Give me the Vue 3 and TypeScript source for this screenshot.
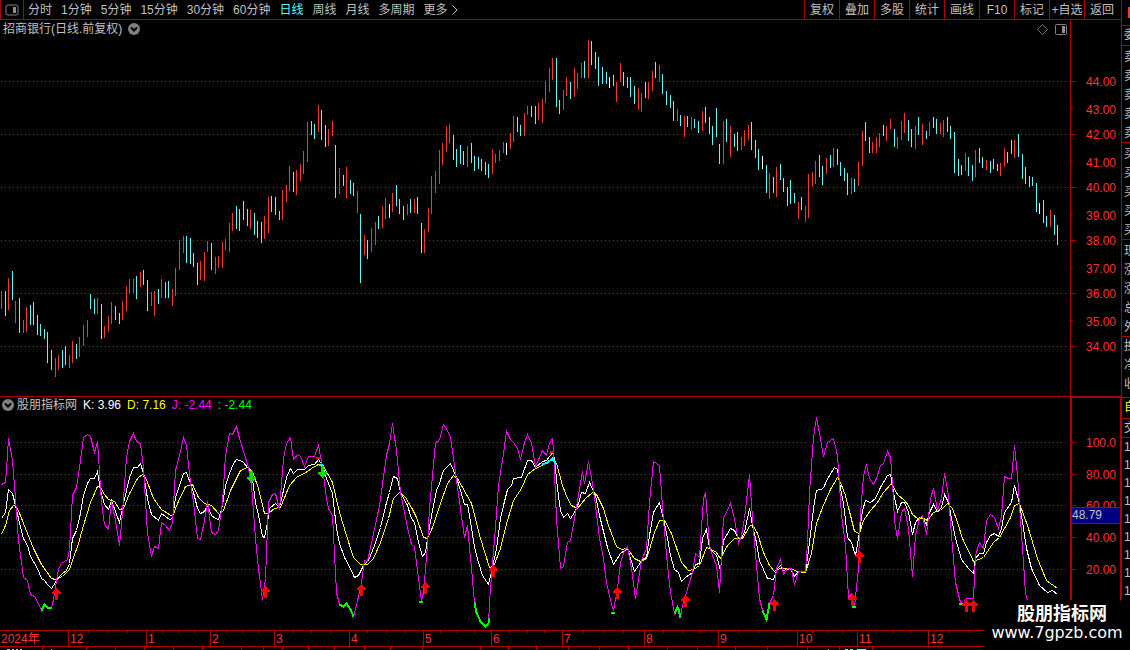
<script setup lang="ts">
import { ref } from 'vue'

interface Candle {
  x: number
  top: number
  height: number
  tone: string
}

const periods = ['分时', '1分钟', '5分钟', '15分钟', '30分钟', '60分钟', '日线', '周线', '月线', '多周期', '更多']
const activePeriod = ref('日线')
const tools = ['复权', '叠加', '多股', '统计', '画线', 'F10', '标记', '+自选', '返回']

const quoteGroups = [
  { id: 'flag', rows: [''] },
  { id: 'ratio', rows: ['委'] },
  { id: 'asks', rows: ['卖', '卖', '卖', '卖', '卖'] },
  { id: 'bids', rows: ['买', '买', '买', '买', '买'] },
  { id: 'stats', rows: ['现', '涨', '涨', '总', '外'] },
  { id: 'extra', rows: ['换', '净', '收'] },
  { id: 'own', rows: ['自'] },
  { id: 'trade', rows: ['交'] },
  { id: 'ticks', rows: ['1', '1', '1', '1', '1', '1', '1', '1', '1'] },
]

// Each entry: x, high, low, tone (r = up, c = down, w = flat)
const candleData = `1 291 309 r;5 291 316 c;8 278 310 r;12 271 300 c;15 301 323 r;19 298 333 c;23 320 333 r;26 307 332 r;30 305 325 c;33 302 325 c;37 315 335 c;40 324 336 c;44 329 339 c;47 332 363 c;51 350 370 c;55 358 377 r;58 355 370 r;62 350 368 c;65 346 365 c;69 355 368 r;72 341 363 r;76 344 359 c;79 337 357 r;83 325 346 r;87 320 337 r;90 294 309 c;94 299 314 c;97 298 314 r;101 304 339 c;104 326 338 r;108 316 332 r;111 302 324 r;115 306 320 c;119 313 324 c;122 301 320 r;126 286 311 r;129 279 294 r;133 279 293 r;136 276 299 c;140 272 287 r;143 270 285 c;147 280 311 c;151 292 306 r;154 291 316 r;158 289 304 c;161 279 298 r;165 282 298 c;168 281 298 c;172 289 306 r;175 268 296 r;179 240 270 r;183 236 253 r;186 236 263 c;190 238 264 c;193 253 267 c;197 263 285 c;200 261 280 r;204 252 281 r;207 241 252 r;211 243 270 c;215 257 274 r;218 256 268 r;222 242 268 r;225 239 250 r;229 223 252 r;232 213 231 r;236 206 229 c;239 209 231 c;243 201 220 c;247 209 226 c;250 210 229 r;254 213 235 c;257 221 238 c;261 222 243 c;264 216 239 r;268 197 233 r;271 196 212 c;275 197 215 c;279 211 220 c;282 190 220 r;286 185 202 r;289 166 191 r;293 172 192 c;296 170 195 r;300 164 181 r;303 151 174 r;307 122 162 r;311 121 135 c;314 124 139 c;318 105 132 r;321 110 140 c;325 125 147 c;328 129 146 r;332 121 136 r;335 145 198 c;339 168 194 r;343 175 186 c;346 167 198 r;350 180 194 c;353 183 196 c;357 191 213 r;360 214 283 c;364 235 255 r;367 240 259 c;371 228 252 r;375 222 245 r;378 216 229 c;382 206 228 r;385 198 219 r;389 204 218 w;392 193 212 r;396 185 206 c;399 199 214 c;403 206 220 c;407 204 215 r;410 199 213 c;414 199 213 r;417 197 214 c;421 223 253 c;424 229 253 r;428 208 232 r;431 176 214 r;435 171 193 r;439 150 184 r;442 143 165 r;446 126 152 r;449 124 143 r;453 135 160 c;456 149 167 c;460 145 164 c;463 151 165 c;467 146 167 r;471 143 163 c;474 156 171 c;478 157 169 c;481 159 171 c;485 162 175 c;488 164 178 c;492 149 174 r;495 154 163 r;499 150 161 r;503 142 153 r;506 143 155 w;510 133 149 r;513 116 142 r;517 117 132 c;520 125 136 c;524 113 136 r;527 106 115 r;531 106 117 c;535 106 124 c;538 103 120 r;542 99 123 r;545 81 103 r;549 68 92 r;552 58 80 r;556 58 107 c;559 100 114 c;563 90 110 r;566 77 96 r;570 82 99 c;574 68 97 r;577 73 89 r;581 63 78 r;584 61 78 c;588 40 78 r;591 41 65 c;595 52 69 c;598 57 86 c;602 67 84 c;606 72 84 c;609 77 88 w;613 75 86 c;616 82 102 r;620 63 82 r;623 72 86 c;627 77 88 c;630 77 97 c;634 86 104 c;638 88 110 r;641 93 112 r;645 82 98 c;648 82 99 r;652 71 91 r;655 62 78 c;659 65 82 r;662 74 94 c;666 91 105 c;670 95 108 c;673 101 121 c;677 109 121 r;680 115 126 c;684 116 137 r;687 116 127 c;691 117 130 r;694 119 128 c;698 121 133 c;702 111 131 r;705 107 123 c;709 117 134 c;712 126 145 c;716 108 137 c;719 144 164 c;723 121 164 r;726 119 142 c;730 126 157 r;734 134 147 c;737 132 151 c;741 137 150 r;744 130 146 r;748 125 140 r;751 122 150 c;755 140 158 c;758 149 170 c;762 156 169 w;766 165 193 c;769 173 199 r;773 177 193 c;776 167 197 r;780 164 180 c;783 178 192 c;787 187 206 c;790 180 204 c;794 193 203 c;798 202 219 r;801 197 210 c;805 206 222 r;808 174 218 r;812 172 187 r;815 161 184 r;819 155 177 c;822 166 185 c;826 158 174 r;830 155 168 c;833 148 167 r;837 149 165 c;840 162 176 c;844 168 181 c;847 173 195 c;851 178 194 r;854 179 192 c;858 162 186 r;862 131 166 r;865 122 141 c;869 137 153 c;872 142 153 r;876 137 153 r;879 133 147 r;883 125 136 c;886 126 141 r;890 119 129 r;894 129 147 c;897 137 149 r;901 121 140 r;904 113 133 r;908 120 141 c;911 129 147 c;915 126 149 r;918 117 135 c;922 124 145 r;926 131 139 c;929 122 136 r;933 117 128 c;936 119 134 c;940 123 134 r;943 120 137 r;947 117 132 c;950 126 139 c;954 132 173 c;958 159 176 c;961 165 175 c;965 153 171 r;968 157 176 c;972 165 181 c;975 150 177 r;979 148 163 c;982 157 168 c;986 160 170 r;990 161 173 c;993 159 169 c;997 164 171 c;1000 163 176 r;1004 148 167 r;1007 152 163 c;1011 140 154 c;1014 140 158 r;1018 134 157 c;1022 154 179 c;1025 167 184 c;1029 176 187 c;1032 177 186 c;1036 183 212 c;1039 203 214 w;1043 200 223 c;1046 216 227 c;1050 210 227 r;1054 215 235 c;1057 225 245 c`

const candles: Candle[] = candleData.split(';').map((entry) => {
  const [x, high, low, tone] = entry.split(' ')
  return { x: Number(x), top: Number(high), height: Number(low) - Number(high), tone }
})

const lineK = '1,518 5,512 8,489 12,493 15,505 20,527 23,538 27,545 30,556 37,568 41,578 44,580 47,584 51,588 55,582 58,577 62,573 66,570 69,563 72,538 76,530 80,513 83,495 87,483 90,478 94,478 97,471 100,490 104,504 108,509 111,500 115,511 119,522 123,503 129,477 133,467 137,467 140,463 143,473 147,498 151,514 158,520 161,513 165,516 169,519 172,518 175,497 179,485 183,473 186,472 190,483 193,492 197,508 200,513 204,511 207,505 211,515 215,518 218,519 222,505 225,485 229,473 233,463 236,459 242,461 248,468 252,478 255,502 258,515 262,536 264,537 267,522 269,508 275,503 279,507 283,490 286,477 290,468 293,473 297,469 304,469 308,465 314,464 318,459 322,465 326,478 332,493 336,528 339,543 344,557 349,566 354,577 358,575 363,565 368,560 374,545 380,527 386,502 389,492 393,476 397,478 400,492 407,505 411,518 414,522 418,542 422,556 425,552 428,532 432,510 436,490 439,483 443,470 450,463 453,470 456,477 460,490 464,504 467,504 471,527 474,547 478,562 482,575 488,584 491,572 496,548 500,518 503,505 507,489 511,485 513,478 521,477 527,460 531,460 535,467 542,461 546,460 552,452 554,458 557,488 560,510 563,517 567,513 570,518 574,512 578,503 581,492 585,493 589,482 595,495 599,515 607,547 613,564 620,553 627,548 634,571 642,559 646,557 649,535 653,512 659,502 663,518 667,538 670,555 674,569 678,572 681,581 685,577 692,572 695,564 699,563 702,538 706,529 709,548 716,555 720,570 723,540 730,528 734,530 738,538 741,537 744,532 749,508 752,525 756,542 759,560 767,578 773,579 777,568 780,565 783,570 790,568 794,576 798,571 805,572 809,542 813,508 816,490 823,488 826,480 834,467 837,469 840,488 843,503 847,537 851,542 855,555 858,538 862,510 865,500 870,502 875,498 880,487 887,475 890,474 894,497 897,511 901,502 904,502 908,512 912,534 915,522 919,517 922,517 926,524 929,512 933,504 937,511 941,507 944,494 948,502 952,523 955,538 961,559 968,568 973,573 975,558 979,553 983,553 986,542 990,535 994,533 998,536 1001,528 1004,512 1011,502 1014,485 1019,503 1023,528 1026,548 1031,568 1039,585 1047,592 1052,590 1057,594'

const lineD = '1,534 5,525 9,510 13,505 16,506 20,515 25,528 33,548 41,564 51,578 55,579 62,576 69,569 73,557 78,543 83,525 90,502 97,486 100,487 104,494 108,499 114,501 119,509 123,508 129,493 137,478 143,473 147,482 153,498 161,509 172,516 177,503 185,486 192,484 198,497 204,503 211,505 219,514 223,510 230,490 240,470 247,467 252,471 258,488 264,513 268,513 274,508 280,507 289,485 297,476 304,473 311,468 318,464 322,464 332,482 338,508 345,532 353,557 360,564 367,564 373,558 380,542 388,518 393,498 399,492 405,497 411,507 416,517 423,537 427,538 432,527 440,503 447,483 453,475 457,478 471,503 480,538 489,567 493,566 500,548 507,520 513,500 521,488 527,474 535,468 542,465 547,462 552,458 556,463 562,485 567,498 571,505 577,508 585,498 592,492 596,494 603,508 608,525 616,546 621,549 627,548 634,558 640,561 646,558 649,549 654,532 659,520 664,520 671,533 681,562 688,570 693,569 699,565 706,547 715,551 720,558 727,545 734,538 742,538 749,526 752,524 757,533 763,552 769,565 774,571 779,568 790,568 797,571 805,572 811,553 816,523 822,507 830,489 837,477 840,482 845,495 854,531 859,533 863,520 870,510 877,502 883,492 891,483 897,494 904,500 908,505 912,514 917,518 923,518 927,520 933,512 940,510 947,503 952,508 957,522 962,538 973,561 983,557 993,542 999,537 1010,517 1014,505 1019,503 1027,525 1037,558 1046,580 1057,588'

const lineJ = '1,484 5,482 6,470 8,438 12,460 15,498 18,540 23,577 27,580 30,594 34,596 37,601 41,610 44,604 47,607 51,607 52,604 55,587 58,568 61,563 67,559 69,549 72,495 76,487 79,467 83,437 87,434 90,436 94,452 97,441 101,502 104,524 108,529 111,501 115,520 119,545 122,512 126,457 129,441 133,433 136,441 140,443 143,467 147,533 151,556 154,546 158,548 161,522 165,525 169,530 172,522 175,470 179,455 183,437 186,445 190,482 193,502 197,538 200,539 204,520 207,501 211,532 215,534 218,530 222,502 225,455 229,433 232,434 236,426 239,438 248,467 251,485 255,538 258,568 262,599 265,578 268,502 272,494 275,493 279,509 283,458 286,443 290,437 293,459 297,454 300,456 304,466 308,456 314,456 318,445 322,467 326,498 328,508 332,515 336,592 339,604 343,606 346,603 353,616 356,605 361,582 364,560 367,561 372,538 379,505 386,455 389,443 392,423 396,450 400,492 407,527 411,544 414,546 418,578 421,600 423,592 427,545 429,508 435,442 439,440 443,424 447,430 450,437 453,458 457,487 464,537 467,525 471,568 474,602 476,612 480,621 485,626 488,623 489,602 491,575 495,527 498,485 503,453 506,431 510,439 513,442 517,448 520,459 524,442 527,434 531,443 535,466 542,450 546,455 549,443 552,438 553,450 556,518 560,568 563,566 567,542 570,540 574,518 578,495 582,471 584,483 588,461 592,483 595,505 599,538 603,558 606,582 610,600 613,610 617,588 620,562 624,550 627,546 631,568 635,598 641,560 646,548 649,502 653,461 659,465 663,520 667,565 670,592 674,613 677,607 680,617 682,605 686,592 692,572 695,553 699,557 703,498 705,492 709,545 712,555 716,565 719,592 723,518 730,503 734,518 738,543 741,535 744,518 749,474 752,518 756,565 759,598 762,610 766,619 769,603 773,595 776,568 780,559 783,574 787,568 791,568 794,584 798,571 805,571 807,542 809,492 813,437 816,417 819,433 823,456 827,442 830,440 833,438 837,455 841,515 845,545 848,597 851,593 854,606 858,568 859,528 863,475 866,464 869,478 873,484 876,478 880,465 883,463 887,451 890,457 892,482 894,520 897,538 901,512 904,508 908,528 912,576 915,535 919,518 922,515 926,534 930,498 933,488 937,510 941,498 944,473 948,495 951,535 955,582 960,602 963,601 966,598 973,598 975,555 979,542 983,548 986,520 990,514 994,517 998,528 1001,515 1004,476 1008,478 1011,478 1014,445 1017,475 1019,505 1023,562 1025,593 1027,600'

const oversold = [
  '41,610 44,604 47,607 51,607',
  '339,604 343,606 346,603 350,609 353,616',
  '418,601 422,601',
  '474,602 476,612 480,621 485,626 488,623 489,618',
  '610,612 614,612',
  '674,613 677,607 678,609 680,617',
  '762,610 766,619 769,603',
  '851,606 855,606',
  '958,603 962,603',
]
const overbought = ['318,464 322,464', '542,464 547,462 552,458 556,465']
const peaks = ['315,457 319,457', '549,454 551,451 553,451']

const buys = [[56, 588], [265, 586], [361, 584], [425, 582], [493, 565], [617, 587], [685, 595], [774, 599], [859, 551], [852, 594], [966, 600], [973, 600]]
const sells = [[251, 471], [322, 466]]

const priceGrid = [81, 134, 187, 240, 293, 346]
const priceLabels = [
  ['44.00', 86], ['43.00', 114], ['42.00', 139], ['41.00', 167], ['40.00', 192], ['39.00', 220],
  ['38.00', 245], ['37.00', 273], ['36.00', 298], ['35.00', 326], ['34.00', 351],
]
const priceMinor = [108, 161, 214, 267, 320]
const kdjGrid = [442, 474, 505, 537, 569]
const kdjLabels = [['100.0', 447], ['80.00', 479], ['60.00', 510], ['40.00', 542], ['20.00', 574]]
const kdjMinor = [458, 490, 553]

const months = [['12', 68], ['1', 146], ['2', 210], ['3', 274], ['4', 349], ['5', 423], ['6', 491], ['7', 562], ['8', 644], ['9', 718], ['10', 797], ['11', 857], ['12', 928]] as [string, number][]
const weekTicks = [88, 107, 127, 162, 178, 194, 226, 242, 258, 293, 311, 330, 367, 386, 405, 440, 457, 474, 509, 527, 544, 583, 603, 623, 663, 682, 700, 738, 758, 777, 812, 827, 842, 875, 893, 910, 949, 969]
const lowerTicks = [42, 86, 115, 144, 173, 202, 241, 263, 282, 308, 334, 364, 390, 422, 480, 508, 536, 568, 599, 628, 667, 697, 735, 767, 807, 839, 872]
</script>

<template>
  <div class="terminal">
    <main class="workspace">
      <header class="toolbar">
        <button class="layout-toggle" type="button" aria-label="布局">
          <svg width="14" height="12" viewBox="0 0 14 12">
            <rect x="1" y="1" width="12" height="10" rx="2" class="frame" />
            <rect x="8" y="3" width="3" height="6" class="pane" />
          </svg>
        </button>
        <nav class="periods">
          <button
            v-for="period in periods"
            :key="period"
            type="button"
            :class="{ active: period === activePeriod }"
            @click="activePeriod = period"
          >{{ period }}</button>
          <svg class="more" width="6" height="10" viewBox="0 0 6 10"><path d="M0.5 0.5 L5 5 L0.5 9.5" /></svg>
        </nav>
        <div class="tools">
          <button v-for="tool in tools" :key="tool" type="button">{{ tool }}</button>
        </div>
      </header>

      <section class="panel price">
        <svg class="plot" viewBox="0 20 1070 376" preserveAspectRatio="none">
          <line v-for="y in priceGrid" :key="y" x1="1" x2="1067" :y1="y + 0.5" :y2="y + 0.5" class="grid" />
          <rect
            v-for="c in candles"
            :key="c.x"
            :x="c.x"
            :y="c.top"
            width="1"
            :height="c.height"
            :class="['candle', c.tone]"
          />
        </svg>
        <svg class="scale" viewBox="1070 20 51 376" preserveAspectRatio="none">
          <rect x="1070" y="20" width="1" height="376" class="rule" />
          <rect v-for="y in priceGrid" :key="y" x="1071" :y="y" width="5" height="1" class="rule" />
          <rect v-for="y in priceMinor" :key="y" x="1071" :y="y" width="2" height="1" class="rule" />
          <text v-for="[label, y] in priceLabels" :key="label" x="1116" :y="y" text-anchor="end">{{ label }}</text>
        </svg>
        <div class="caption">
          <span>招商银行(日线.前复权)</span>
          <svg class="fold" width="12" height="12" viewBox="0 0 12 12"><circle cx="6" cy="6" r="6" /><path d="M3 4.5 L6 7.5 L9 4.5" /></svg>
        </div>
        <div class="corner">
          <svg width="11" height="11" viewBox="0 0 11 11"><path d="M5.5 0.5 L10.5 5.5 L5.5 10.5 L0.5 5.5 Z" class="thin" /></svg>
          <svg width="12" height="11" viewBox="0 0 12 11">
            <rect x="0.5" y="0.5" width="11" height="10" rx="1" class="frame" />
            <rect x="7" y="2" width="3" height="7" class="pane" />
          </svg>
        </div>
      </section>

      <section class="panel kdj">
        <svg class="plot" viewBox="0 396 1070 234" preserveAspectRatio="none">
          <rect x="0" y="396" width="1070" height="1" class="rule" />
          <line v-for="y in kdjGrid" :key="y" x1="1" x2="1067" :y1="y + 0.5" :y2="y + 0.5" class="grid" />
          <g transform="translate(0.5 0.5)">
            <polyline :points="lineK" class="curve k" />
            <polyline :points="lineD" class="curve d" />
            <polyline :points="lineJ" class="curve j" />
            <polyline v-for="p in oversold" :key="p" :points="p" class="curve low" />
            <polyline v-for="p in overbought" :key="p" :points="p" class="curve high" />
            <polyline v-for="p in peaks" :key="p" :points="p" class="curve peak" />
          </g>
          <path v-for="[x, y] in buys" :key="x" :d="`M${x} ${y} h1 l4 5 v1 h-3 v6 h-3 v-6 h-3 v-1 z`" class="buy" />
          <path v-for="[x, y] in sells" :key="x" :d="`M${x - 1} ${y} h3 v6 h3 v1 l-4 5 h-1 l-4 -5 v-1 h3 z`" class="sell" />
        </svg>
        <svg class="scale" viewBox="1070 396 51 234" preserveAspectRatio="none">
          <rect x="1070" y="396" width="51" height="2" class="rule" />
          <rect x="1070" y="396" width="2" height="234" class="rule" />
          <rect x="1120" y="396" width="1" height="234" class="rule" />
          <rect v-for="y in kdjGrid" :key="y" x="1072" :y="y" width="4" height="1" class="rule" />
          <rect v-for="y in kdjMinor" :key="y" x="1072" :y="y" width="1" height="1" class="rule" />
          <text v-for="[label, y] in kdjLabels" :key="label" x="1116" :y="y" text-anchor="end">{{ label }}</text>
          <rect x="1072" y="507" width="48" height="17" class="rule" />
          <rect x="1072" y="508" width="48" height="15" class="cursor" />
          <text x="1072" y="519" class="cursor-value">48.79</text>
        </svg>
        <div class="caption readings">
          <svg class="fold" width="12" height="12" viewBox="0 0 12 12"><circle cx="6" cy="6" r="6" /><path d="M3 4.5 L6 7.5 L9 4.5" /></svg>
          <span class="name">股朋指标网</span>
          <span class="k">K: 3.96</span>
          <span class="d">D: 7.16</span>
          <span class="j">J: -2.44</span>
          <span class="low">: -2.44</span>
        </div>
      </section>

      <footer class="timeline">
        <svg viewBox="0 630 1121 20" preserveAspectRatio="none">
          <rect x="0" y="630" width="1121" height="1" class="rule" />
          <rect x="0" y="646" width="1121" height="1" class="rule" />
          <rect v-for="x in weekTicks" :key="x" :x="x" y="631" width="1" height="2" class="rule" />
          <rect v-for="x in lowerTicks" :key="x" :x="x" y="647" width="1" height="3" class="rule" />
          <rect v-for="[m, x] in months" :key="x" :x="x" y="631" width="1" height="15" class="rule" />
          <text x="1" y="643">2024年</text>
          <text v-for="[m, x] in months" :key="x" :x="x + 2" y="643">{{ m }}</text>
          <path d="M7 649.5 h3 M12 649.5 h2 M16 649.5 h2 M20 649.5 h2 M51 649.5 h1 M828 649.5 h1" class="fragment" />
          <path d="M845 649.5 h3 M850 649.5 h3 M857 649.5 h9" class="fragment cyan" />
        </svg>
      </footer>
    </main>

    <aside class="quotes">
      <div v-for="group in quoteGroups" :key="group.id" :class="['group', group.id]">
        <span v-for="(row, i) in group.rows" :key="i">{{ row }}</span>
      </div>
    </aside>

    <div class="watermark">
      <strong>股朋指标网</strong>
      <span>www.7gpzb.com</span>
    </div>
  </div>
</template>

<style>
body {
  margin: 0;
  background: #000;
}
</style>

<style scoped>
.terminal {
  position: relative;
  display: flex;
  height: 100vh;
  min-height: 480px;
  overflow: hidden;
  background: #000;
  color: #c0c0c0;
  font-family: "Liberation Sans", "Noto Sans CJK SC", sans-serif;
  font-size: 12px;
  line-height: 16px;
}

.workspace {
  display: flex;
  flex: 1;
  flex-direction: column;
  min-width: 0;
}

.toolbar {
  display: flex;
  flex: none;
  box-sizing: border-box;
  height: 20px;
  border-bottom: 1px solid #b00000;
}

button {
  padding: 0;
  border: 0;
  background: none;
  color: inherit;
  font: inherit;
  white-space: nowrap;
  cursor: pointer;
}

.layout-toggle {
  display: flex;
  align-items: center;
  justify-content: center;
  box-sizing: border-box;
  width: 24px;
  border: solid #b00000;
  border-width: 0 1px;
}

.frame {
  fill: none;
  stroke: #808080;
}

.pane {
  fill: #909090;
}

.thin {
  fill: none;
  stroke: #707070;
}

.periods {
  display: flex;
  flex: 1;
  align-items: center;
  gap: 9px;
  padding-left: 4px;
}

.periods .active {
  color: #55ffff;
}

.more {
  margin-left: -5px;
  fill: none;
  stroke: #c0c0c0;
}

.tools {
  display: flex;
}

.tools button {
  box-sizing: border-box;
  width: 35px;
  border-left: 1px solid #b00000;
}

.tools button:last-child {
  width: 37px;
  padding-right: 2px;
}

.panel {
  position: relative;
  display: grid;
  grid-template-columns: 1fr 51px;
  min-height: 0;
}

.price {
  flex: 376 1 0;
}

.kdj {
  flex: 234 1 0;
}

.plot,
.scale,
.timeline svg {
  display: block;
  width: 100%;
  height: 100%;
  min-height: 0;
  shape-rendering: crispEdges;
}

.grid {
  stroke: #b00000;
  stroke-dasharray: 1 3;
}

.rule {
  fill: #b00000;
}

.r {
  fill: #ff3232;
}

.c {
  fill: #55ffff;
}

.w {
  fill: #fff;
}

.scale text,
.timeline text {
  fill: #ff3232;
}

.scale .cursor {
  fill: #000080;
}

.scale .cursor-value {
  fill: #c0c0c0;
}

.curve {
  fill: none;
  stroke-width: 1;
}

.curve.k {
  stroke: #fff;
}

.curve.d {
  stroke: #ff0;
}

.curve.j {
  stroke: #f0f;
}

.curve.low {
  stroke: #0f0;
  stroke-width: 2;
}

.curve.high {
  stroke: #0ff;
  stroke-width: 2;
}

.curve.peak {
  stroke: #f00;
  stroke-width: 2;
}

.buy {
  fill: #f00;
}

.sell {
  fill: #00e000;
}

.caption {
  position: absolute;
  top: 1px;
  left: 3px;
  display: flex;
  align-items: center;
  gap: 6px;
}

.fold circle {
  fill: #808080;
}

.fold path {
  fill: none;
  stroke: #000;
  stroke-width: 2;
}

.readings {
  left: 2px;
}

.readings .name {
  margin-left: -3px;
}

.readings .k {
  color: #fff;
}

.readings .d {
  color: #ff0;
}

.readings .j {
  color: #f0f;
}

.readings .low {
  color: #0f0;
}

.corner {
  position: absolute;
  top: 4px;
  right: 54px;
  display: flex;
  gap: 7px;
}

.timeline {
  flex: none;
  height: 20px;
}

.fragment {
  stroke: #c0c0c0;
}

.fragment.cyan {
  stroke: #55ffff;
}

.quotes {
  flex: none;
  box-sizing: border-box;
  width: 9px;
  overflow: hidden;
  border-left: 1px solid #b00000;
}

.group {
  display: flex;
  flex-direction: column;
  box-sizing: border-box;
  padding-left: 2px;
  border-bottom: 1px solid #b00000;
  line-height: 19px;
}

.flag {
  height: 26px;
  padding: 7px 0 0 6px;
}

.flag span {
  height: 11px;
  background: #ff3232;
}

.ratio {
  height: 20px;
}

.asks,
.bids,
.stats {
  height: 97px;
  padding-top: 2px;
}

.extra {
  height: 61px;
}

.own {
  height: 21px;
  color: #ff0;
}

.trade {
  height: 19px;
}

.ticks {
  border: 0;
  line-height: 18px;
}

.watermark {
  position: absolute;
  right: 0;
  bottom: 0;
  display: flex;
  flex-direction: column;
  align-items: center;
  box-sizing: border-box;
  width: 146px;
  height: 50px;
  padding-top: 4px;
  background: #000;
  color: #fff;
}

.watermark strong {
  margin-left: 10px;
  font-size: 18px;
  line-height: 20px;
}

.watermark span {
  font-family: "DejaVu Sans", sans-serif;
  font-size: 16px;
  line-height: 18px;
}
</style>
